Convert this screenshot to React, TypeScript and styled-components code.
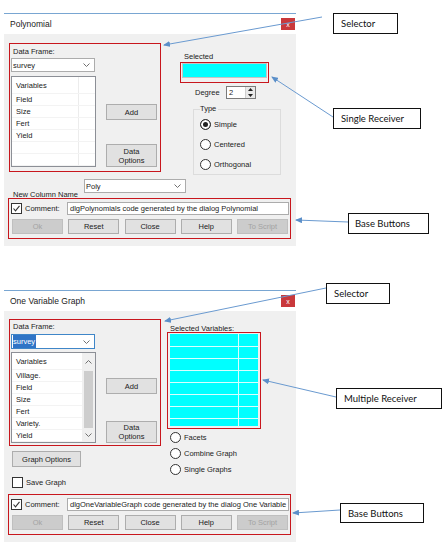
import React from "react";
import styled, { createGlobalStyle } from "styled-components";

const GlobalStyle = createGlobalStyle`
  html, body { margin: 0; padding: 0; background: #ffffff; }
  body {
    font-family: "Liberation Sans", Arial, sans-serif;
    font-size: 7.5px;
    color: #1b1b1b;
  }
  * { box-sizing: border-box; }
`;

const Page = styled.main`
  position: relative;
  width: 444px;
  height: 545px;
  overflow: hidden;
`;

const Figure = styled.section<{ $top: number }>`
  padding: ${(p) => p.$top}px 0 0 4px;
`;

const Dialog = styled.div`
  width: 292px;
  border-top: 1px solid #79a6d2;
`;

const TitleBar = styled.div`
  height: 20px;
  display: flex;
  align-items: center;
  justify-content: space-between;
  padding: 0 1px 0 6px;
  background: #fff;
`;

const Title = styled.span`
  font-size: 8.5px;
  color: #222;
`;

const CloseButton = styled.div`
  width: 14px;
  height: 12px;
  background: #c9383b;
  color: #fff;
  font-size: 7px;
  line-height: 7px;
  display: flex;
  align-items: center;
  justify-content: center;
`;

const Body = styled.div<{ $top: number }>`
  background: #f0f0f0;
  padding: ${(p) => p.$top}px 5px 7px 4px;
`;

const TopRow = styled.div`
  display: flex;
  align-items: flex-start;
`;

const RedFrame = styled.div`
  position: relative;
  border: 1px solid #c8161d;
`;

// the "Selector" area: data frame + variable list + add/options buttons
const SelectorBox = styled(RedFrame)<{ $top: number; $bottom: number }>`
  width: 152px;
  margin-left: 1px;
  display: flex;
  padding: ${(p) => p.$top}px 3px ${(p) => p.$bottom}px 1px;
`;

const LeftCol = styled.div`
  width: 85px;
  display: flex;
  flex-direction: column;
`;

const FieldLabel = styled.div`
  height: 11px;
  line-height: 11px;
  padding-left: 2px;
  white-space: nowrap;
`;

const ComboBox = styled.div<{ $w: number; $h: number; $mt?: number; $focus?: boolean }>`
  width: ${(p) => p.$w}px;
  height: ${(p) => p.$h}px;
  margin-top: ${(p) => p.$mt ?? 0}px;
  background: #fff;
  border: 1px solid ${(p) => (p.$focus ? "#3f86c8" : "#acacac")};
  display: flex;
  align-items: center;
  justify-content: space-between;
  padding: 0 4px 0 1px;
`;

const Highlight = styled.span`
  background: #2f74c6;
  color: #fff;
  padding: 2px 1px 2px 0;
`;

const ListFrame = styled.div<{ $mt: number }>`
  margin-top: ${(p) => p.$mt}px;
  height: 91px;
  border: 1px solid #8c8f96;
  background: #fff;
  display: flex;
`;

const ListBody = styled.div`
  flex: 1;
  display: flex;
  flex-direction: column;
`;

const ListRow = styled.div<{ $header?: boolean }>`
  height: ${(p) => (p.$header ? 17 : 12)}px;
  display: flex;
  border-bottom: 1px solid #f3f3f3;
`;

const ListCell = styled.div<{ $divider?: boolean }>`
  width: ${(p) => (p.$divider ? "67px" : "100%")};
  display: flex;
  align-items: center;
  padding-left: 4px;
  border-right: ${(p) => (p.$divider ? "1px solid #ececec" : "none")};
`;

const ScrollBar = styled.div`
  width: 13px;
  background: #f0f0f0;
  display: flex;
  flex-direction: column;
  align-items: center;
`;

const ScrollArrow = styled.div<{ $h: number }>`
  height: ${(p) => p.$h}px;
  width: 100%;
  display: flex;
  align-items: center;
  justify-content: center;
`;

const ScrollThumb = styled.div`
  width: 9px;
  height: 57px;
  margin-top: 1px;
  background: #cdcdcd;
`;

const Spacer = styled.div`
  flex: 1;
`;

const ButtonCol = styled.div<{ $top: number }>`
  margin-left: 10px;
  width: 51px;
  align-self: stretch;
  display: flex;
  flex-direction: column;
  justify-content: space-between;
  padding-top: ${(p) => p.$top}px;
`;

const PushButton = styled.button<{ $w: number; $h: number }>`
  width: ${(p) => p.$w}px;
  height: ${(p) => p.$h}px;
  margin: 0;
  padding: 0;
  font: inherit;
  line-height: 9px;
  color: #1b1b1b;
  background: #e1e1e1;
  border: 1px solid #adadad;
  border-radius: 0;

  &:disabled {
    background: #cccccc;
    border-color: #bfbfbf;
    color: #a3a3a3;
  }
`;

const GraphOptionsButton = styled(PushButton)`
  margin: 5px 0 0 4px;
`;

const SingleCol = styled.div`
  margin-left: 19px;
  display: flex;
  flex-direction: column;
`;

const SmallLabel = styled.div<{ $mt: number; $pl: number }>`
  height: 11px;
  line-height: 11px;
  margin-top: ${(p) => p.$mt}px;
  padding-left: ${(p) => p.$pl}px;
  white-space: nowrap;
`;

const SingleReceiver = styled(RedFrame)`
  width: 89px;
  height: 21px;
  padding: 0 1px 4px 1px;
`;

const CyanField = styled.div`
  height: 15px;
  background: #00ffff;
  border: 1px solid #c4c4c4;
`;

const DegreeRow = styled.div`
  margin: 3px 0 0 15px;
  height: 13px;
  display: flex;
  align-items: center;
`;

const DegreeLabel = styled.span`
  width: 31px;
`;

const Spinner = styled.div`
  width: 30px;
  height: 13px;
  border: 1px solid #7a7a7a;
  background: #fff;
  display: flex;
`;

const SpinValue = styled.span`
  flex: 1;
  padding-left: 2px;
  line-height: 11px;
`;

const SpinButtons = styled.div`
  width: 10px;
  display: flex;
  flex-direction: column;
  background: #e9e9e9;
  border-left: 1px solid #cfcfcf;
`;

const SpinHalf = styled.div`
  flex: 1;
  display: flex;
  align-items: center;
  justify-content: center;
`;

const GroupBox = styled.fieldset`
  margin: 5px 0 0 13px;
  width: 88px;
  height: 71px;
  padding: 0 0 1px 6px;
  border: 1px solid #dcdcdc;
  min-inline-size: 0;
`;

const GroupLegend = styled.legend`
  padding: 0 2px 0 0;
  line-height: 10px;
`;

const RadioRow = styled.div<{ $h: number; $pl?: number }>`
  height: ${(p) => p.$h}px;
  display: flex;
  align-items: center;
  gap: 3px;
  padding-left: ${(p) => p.$pl ?? 0}px;
  white-space: nowrap;
`;

const RadioDot = styled.span<{ $on?: boolean }>`
  width: 11px;
  height: 11px;
  border-radius: 50%;
  border: 1px solid #333;
  background: ${(p) => (p.$on ? "#222" : "#fff")};
  box-shadow: inset 0 0 0 2px #fff;
  flex: none;
`;

const NameRow = styled.div`
  margin-top: 4px;
  height: 19px;
  display: flex;
  align-items: flex-start;
  padding-left: 5px;
`;

const NameLabel = styled.span`
  width: 71px;
  padding-top: 11px;
  line-height: 9px;
  white-space: nowrap;
`;

const BaseBox = styled(RedFrame)<{ $mt: number }>`
  margin-top: ${(p) => p.$mt}px;
  height: 41px;
  padding: 3px 1px 4px 2px;
  display: flex;
  flex-direction: column;
  gap: 4px;
`;

const CheckRow = styled.div<{ $mt?: number; $ml?: number }>`
  display: flex;
  align-items: center;
  height: 13px;
  margin: ${(p) => p.$mt ?? 0}px 0 0 ${(p) => p.$ml ?? 0}px;
`;

const CheckBox = styled.span`
  width: 11px;
  height: 11px;
  border: 1px solid #333;
  background: #fff;
  display: flex;
  align-items: center;
  justify-content: center;
  flex: none;
`;

const CheckText = styled.span<{ $w?: number }>`
  margin-left: 3px;
  width: ${(p) => (p.$w ? `${p.$w}px` : "auto")};
  white-space: nowrap;
`;

const CommentInput = styled.div`
  width: 222px;
  height: 13px;
  border: 1px solid #acacac;
  background: #fff;
  padding-left: 2px;
  line-height: 11px;
  white-space: nowrap;
  overflow: hidden;
`;

const ButtonRow = styled.div`
  display: flex;
  justify-content: space-between;
  height: 15px;
  padding: 0 1px;
`;

const Columns = styled.div`
  display: flex;
  align-items: flex-start;
`;

const LeftStack = styled.div`
  display: flex;
  flex-direction: column;
  align-items: flex-start;
`;

const MultiCol = styled.div`
  margin-left: 6px;
  display: flex;
  flex-direction: column;
`;

const MultiReceiver = styled(RedFrame)`
  margin-top: -2px;
  width: 94px;
  height: 97px;
  padding: 1px 2px 2px 2px;
`;

const CyanGrid = styled.div`
  height: 100%;
  background: #00ffff;
  display: flex;
  flex-direction: column;
`;

const CyanRow = styled.div<{ $h?: number }>`
  height: ${(p) => (p.$h ? `${p.$h}px` : "auto")};
  flex: ${(p) => (p.$h ? "none" : "1")};
  border-bottom: ${(p) => (p.$h ? "1px solid #d8ffff" : "none")};
  display: flex;
`;

const CyanCell = styled.div`
  width: 69px;
  border-right: 1px solid #d8ffff;
`;

// annotation callouts sit on top of the page, next to the dialogs
const Callout = styled.div<{ $x: number; $y: number; $w: number; $h: number; $pad: number }>`
  position: absolute;
  left: ${(p) => p.$x}px;
  top: ${(p) => p.$y}px;
  width: ${(p) => p.$w}px;
  height: ${(p) => p.$h}px;
  border: 1px solid #111;
  background: #fff;
  display: flex;
  align-items: center;
  padding-left: ${(p) => p.$pad}px;
  font-family: Lato, "Liberation Sans", sans-serif;
  font-size: 9.5px;
  color: #111;
  white-space: nowrap;
`;

const ArrowLayer = styled.svg`
  position: absolute;
  left: 0;
  top: 0;
  pointer-events: none;
`;

const Chevron = ({ up }: { up?: boolean }) => (
  <svg width="7" height="4" viewBox="0 0 7 4">
    <polyline
      points={up ? "0.5,3.5 3.5,0.5 6.5,3.5" : "0.5,0.5 3.5,3.5 6.5,0.5"}
      fill="none"
      stroke="#707070"
      strokeWidth="1"
    />
  </svg>
);

const Tick = () => (
  <svg width="9" height="9" viewBox="0 0 9 9">
    <polyline points="1.5,4.5 3.5,6.8 7.5,1.8" fill="none" stroke="#333" strokeWidth="1.1" />
  </svg>
);

const Tri = ({ up }: { up?: boolean }) => (
  <svg width="5" height="3" viewBox="0 0 5 3">
    <polygon points={up ? "0,3 2.5,0 5,3" : "0,0 2.5,3 5,0"} fill="#222" />
  </svg>
);

const baseButtons = [
  { label: "Ok", disabled: true },
  { label: "Reset" },
  { label: "Close" },
  { label: "Help" },
  { label: "To Script", disabled: true },
];

function BaseButtons({ comment, mt }: { comment: string; mt: number }) {
  return (
    <BaseBox $mt={mt}>
      <CheckRow>
        <CheckBox>
          <Tick />
        </CheckBox>
        <CheckText $w={42}>Comment:</CheckText>
        <CommentInput>{comment}</CommentInput>
      </CheckRow>
      <ButtonRow>
        {baseButtons.map((b) => (
          <PushButton key={b.label} $w={51} $h={15} disabled={b.disabled}>
            {b.label}
          </PushButton>
        ))}
      </ButtonRow>
    </BaseBox>
  );
}

function VariableList({
  items,
  rows,
  divider,
  scroll,
  mt,
}: {
  items: string[];
  rows: number;
  divider?: boolean;
  scroll?: boolean;
  mt: number;
}) {
  const filled = Array.from({ length: rows }, (_, i) => items[i] ?? "");
  return (
    <ListFrame $mt={mt}>
      <ListBody>
        <ListRow $header>
          <ListCell $divider={divider}>Variables</ListCell>
        </ListRow>
        {filled.map((v, i) => (
          <ListRow key={i}>
            <ListCell $divider={divider}>{v}</ListCell>
          </ListRow>
        ))}
      </ListBody>
      {scroll && (
        <ScrollBar>
          <ScrollArrow $h={17}>
            <Chevron up />
          </ScrollArrow>
          <ScrollThumb />
          <Spacer />
          <ScrollArrow $h={14}>
            <Chevron />
          </ScrollArrow>
        </ScrollBar>
      )}
    </ListFrame>
  );
}

const arrows = [
  [322, 17, 164, 45],
  [333, 117, 272, 77],
  [348, 222, 296, 220],
  [326, 288, 165, 321],
  [336, 397, 263, 380],
  [340, 510, 293, 513],
];

function Annotations() {
  return (
    <>
      <Callout $x={333} $y={13} $w={65} $h={21} $pad={7}>Selector</Callout>
      <Callout $x={333} $y={108} $w={88} $h={21} $pad={7}>Single Receiver</Callout>
      <Callout $x={348} $y={213} $w={81} $h={21} $pad={6}>Base Buttons</Callout>
      <Callout $x={326} $y={283} $w={64} $h={21} $pad={7}>Selector</Callout>
      <Callout $x={336} $y={388} $w={106} $h={21} $pad={7}>Multiple Receiver</Callout>
      <Callout $x={340} $y={503} $w={84} $h={20} $pad={7}>Base Buttons</Callout>
      <ArrowLayer width="444" height="545" viewBox="0 0 444 545">
        <defs>
          <marker
            id="head"
            markerWidth="7"
            markerHeight="6"
            refX="6"
            refY="3"
            orient="auto"
            markerUnits="userSpaceOnUse"
          >
            <path d="M0,0 L7,3 L0,6 z" fill="#5b8fc9" />
          </marker>
        </defs>
        {arrows.map(([x1, y1, x2, y2], i) => (
          <line
            key={i}
            x1={x1}
            y1={y1}
            x2={x2}
            y2={y2}
            stroke="#6a9ad0"
            strokeWidth="1"
            markerEnd="url(#head)"
          />
        ))}
      </ArrowLayer>
    </>
  );
}

function PolynomialDialog() {
  return (
    <Figure $top={13}>
      <Dialog>
        <TitleBar>
          <Title>Polynomial</Title>
          <CloseButton>x</CloseButton>
        </TitleBar>
        <Body $top={9}>
          <TopRow>
            <SelectorBox $top={2} $bottom={4}>
              <LeftCol>
                <FieldLabel>Data Frame:</FieldLabel>
                <ComboBox $w={84} $h={14} $mt={1}>
                  <span>survey</span>
                  <Chevron />
                </ComboBox>
                <VariableList items={["Field", "Size", "Fert", "Yield"]} rows={6} divider mt={4} />
              </LeftCol>
              <ButtonCol $top={58}>
                <PushButton $w={51} $h={16}>Add</PushButton>
                <PushButton $w={51} $h={23}>
                  Data
                  <br />
                  Options
                </PushButton>
              </ButtonCol>
            </SelectorBox>
            <SingleCol>
              <SmallLabel $mt={8} $pl={4}>Selected</SmallLabel>
              <SingleReceiver>
                <CyanField />
              </SingleReceiver>
              <DegreeRow>
                <DegreeLabel>Degree</DegreeLabel>
                <Spinner>
                  <SpinValue>2</SpinValue>
                  <SpinButtons>
                    <SpinHalf>
                      <Tri up />
                    </SpinHalf>
                    <SpinHalf>
                      <Tri />
                    </SpinHalf>
                  </SpinButtons>
                </Spinner>
              </DegreeRow>
              <GroupBox>
                <GroupLegend>Type</GroupLegend>
                <RadioRow $h={20}>
                  <RadioDot $on />
                  Simple
                </RadioRow>
                <RadioRow $h={20}>
                  <RadioDot />
                  Centered
                </RadioRow>
                <RadioRow $h={20}>
                  <RadioDot />
                  Orthogonal
                </RadioRow>
              </GroupBox>
            </SingleCol>
          </TopRow>
          <NameRow>
            <NameLabel>New Column Name</NameLabel>
            <ComboBox $w={102} $h={14}>
              <span>Poly</span>
              <Chevron />
            </ComboBox>
          </NameRow>
          <BaseButtons mt={0} comment="dlgPolynomials code generated by the dialog Polynomial" />
        </Body>
      </Dialog>
    </Figure>
  );
}

function OneVariableGraphDialog() {
  return (
    <Figure $top={44}>
      <Dialog>
        <TitleBar>
          <Title>One Variable Graph</Title>
          <CloseButton>x</CloseButton>
        </TitleBar>
        <Body $top={8}>
          <Columns>
            <LeftStack>
              <SelectorBox $top={1} $bottom={2}>
                <LeftCol>
                  <FieldLabel>Data Frame:</FieldLabel>
                  <ComboBox $w={84} $h={15} $mt={2} $focus>
                    <Highlight>survey</Highlight>
                    <Chevron />
                  </ComboBox>
                  <VariableList
                    items={["Village.", "Field", "Size", "Fert", "Variety.", "Yield"]}
                    rows={6}
                    scroll
                    mt={3}
                  />
                </LeftCol>
                <ButtonCol $top={57}>
                  <PushButton $w={51} $h={16}>Add</PushButton>
                  <PushButton $w={51} $h={22}>
                    Data
                    <br />
                    Options
                  </PushButton>
                </ButtonCol>
              </SelectorBox>
              <GraphOptionsButton $w={69} $h={16}>Graph Options</GraphOptionsButton>
              <CheckRow $mt={9} $ml={4}>
                <CheckBox />
                <CheckText>Save Graph</CheckText>
              </CheckRow>
            </LeftStack>
            <MultiCol>
              <SmallLabel $mt={4} $pl={3}>Selected Variables:</SmallLabel>
              <MultiReceiver>
                <CyanGrid>
                  <CyanRow $h={13}>
                    <CyanCell />
                  </CyanRow>
                  {Array.from({ length: 6 }, (_, i) => (
                    <CyanRow key={i} $h={12}>
                      <CyanCell />
                    </CyanRow>
                  ))}
                  <CyanRow>
                    <CyanCell />
                  </CyanRow>
                </CyanGrid>
              </MultiReceiver>
              <RadioRow $h={16} $pl={3}>
                <RadioDot />
                Facets
              </RadioRow>
              <RadioRow $h={16} $pl={3}>
                <RadioDot />
                Combine Graph
              </RadioRow>
              <RadioRow $h={16} $pl={3}>
                <RadioDot />
                Single Graphs
              </RadioRow>
            </MultiCol>
          </Columns>
          <BaseButtons
            mt={5}
            comment="dlgOneVariableGraph code generated by the dialog One Variable Graph"
          />
        </Body>
      </Dialog>
    </Figure>
  );
}

export default function App() {
  return (
    <Page>
      <GlobalStyle />
      <PolynomialDialog />
      <OneVariableGraphDialog />
      <Annotations />
    </Page>
  );
}
